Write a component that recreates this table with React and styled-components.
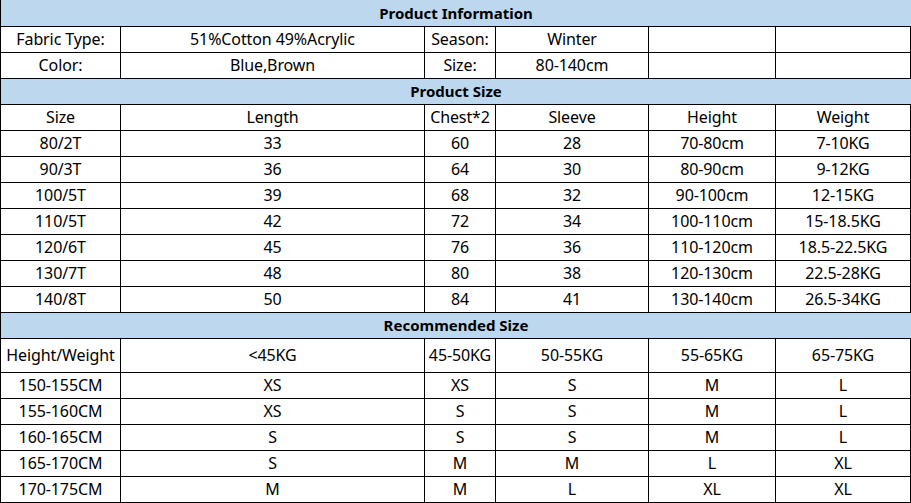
import React from "react";
import styled, { createGlobalStyle } from "styled-components";

const Global = createGlobalStyle`
  html, body { margin: 0; padding: 0; background: #fff; }
  body { font-family: "Noto Sans", "Open Sans", sans-serif; color: #000; }
`;

const Sheet = styled.div`
  display: grid;
  grid-template-columns: 120px 304px 71px 153px 127px 135px;
  width: 911px;
  box-sizing: border-box;
  border-left: 1px solid #000;
`;

const Cell = styled.div`
  box-sizing: border-box;
  height: ${(p) => (p.$tall ? 34 : 26)}px;
  border-right: 1px solid #000;
  border-bottom: 1px solid #000;
  display: flex;
  align-items: center;
  justify-content: center;
  font-size: 16px;
  letter-spacing: -0.1px;
  white-space: nowrap;
  padding-bottom: 1px;
`;

const Banner = styled(Cell)`
  grid-column: 1 / -1;
  background: #bdd7ee;
  font-weight: 700;
  font-size: 15px;
  letter-spacing: 0;
  border-right: none;
  height: ${(p) => (p.$first ? 27 : 26)}px;
`;

const info = [
  ["Fabric Type:", "51%Cotton 49%Acrylic", "Season:", "Winter", "", ""],
  ["Color:", "Blue,Brown", "Size:", "80-140cm", "", ""],
];

const sizes = [
  ["Size", "Length", "Chest*2", "Sleeve", "Height", "Weight"],
  ["80/2T", "33", "60", "28", "70-80cm", "7-10KG"],
  ["90/3T", "36", "64", "30", "80-90cm", "9-12KG"],
  ["100/5T", "39", "68", "32", "90-100cm", "12-15KG"],
  ["110/5T", "42", "72", "34", "100-110cm", "15-18.5KG"],
  ["120/6T", "45", "76", "36", "110-120cm", "18.5-22.5KG"],
  ["130/7T", "48", "80", "38", "120-130cm", "22.5-28KG"],
  ["140/8T", "50", "84", "41", "130-140cm", "26.5-34KG"],
];

const rec = [
  ["Height/Weight", "<45KG", "45-50KG", "50-55KG", "55-65KG", "65-75KG"],
  ["150-155CM", "XS", "XS", "S", "M", "L"],
  ["155-160CM", "XS", "S", "S", "M", "L"],
  ["160-165CM", "S", "S", "S", "M", "L"],
  ["165-170CM", "S", "M", "M", "L", "XL"],
  ["170-175CM", "M", "M", "L", "XL", "XL"],
];

const Rows = ({ rows, tallFirst }) =>
  rows.flatMap((r, i) =>
    r.map((c, j) => (
      <Cell key={`${i}-${j}`} $tall={tallFirst && i === 0}>
        {c}
      </Cell>
    ))
  );

export default function App() {
  return (
    <>
      <Global />
      <Sheet>
        <Banner $first>Product Information</Banner>
        <Rows rows={info} />
        <Banner>Product Size</Banner>
        <Rows rows={sizes} />
        <Banner>Recommended Size</Banner>
        <Rows rows={rec} tallFirst />
      </Sheet>
    </>
  );
}
